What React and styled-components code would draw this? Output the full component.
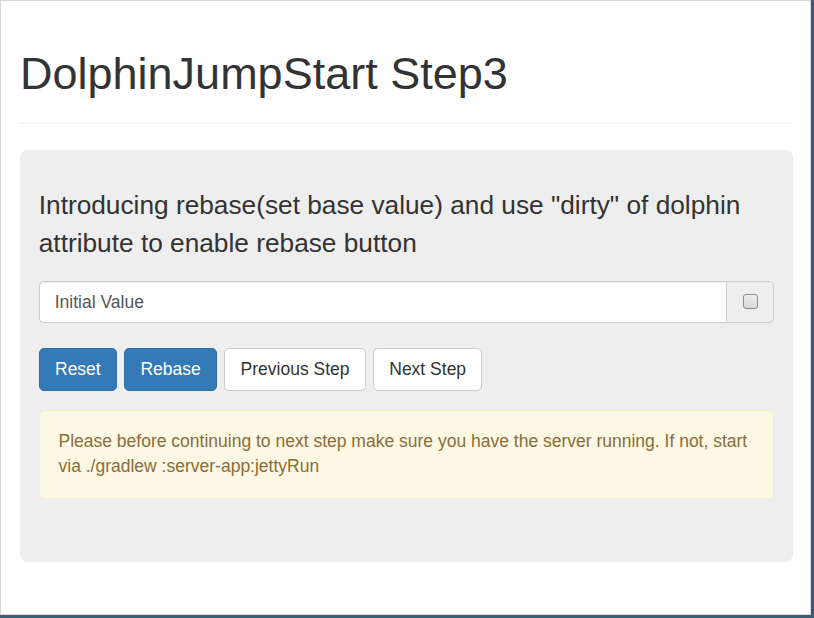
import React from "react";
import styled, { createGlobalStyle } from "styled-components";

const GlobalStyle = createGlobalStyle`
  html, body {
    margin: 0;
    padding: 0;
    background: #ffffff;
  }
  body {
    font-family: "Liberation Sans", Arial, sans-serif;
    color: #333333;
  }
`;

const Window = styled.div`
  width: 814px;
  height: 618px;
  box-sizing: border-box;
  border-right: 3px solid #3d5a79;
  border-bottom: 3px solid #3d5a79;
  background: #3d5a79;
`;

const Page = styled.div`
  height: 100%;
  box-sizing: border-box;
  border: 1px solid #d6d6d6;
  background: #ffffff;
  padding: 0 17px 0 19px;
`;

const PageHeader = styled.div`
  padding: 48px 0 24px;
  border-bottom: 1px solid #eeeeee;
  margin-bottom: 26px;
`;

const Title = styled.h1`
  margin: 0;
  font-size: 45px;
  line-height: 49.5px;
  font-weight: 500;
  color: #333333;
`;

const Jumbotron = styled.div`
  background: #eeeeee;
  border-radius: 7.5px;
  padding: 37.5px 18.75px;
`;

const Lead = styled.p`
  margin: 0 0 18.75px;
  font-size: 26.25px;
  line-height: 37.5px;
  font-weight: 400;
`;

const InputGroup = styled.div`
  display: flex;
  height: 42.5px;
  margin-bottom: 25px;
`;

const TextInput = styled.input`
  flex: 1;
  min-width: 0;
  box-sizing: border-box;
  height: 42.5px;
  padding: 7.5px 15px;
  font-family: inherit;
  font-size: 17.5px;
  color: #555555;
  background: #ffffff;
  border: 1.25px solid #cccccc;
  border-right: none;
  border-radius: 5px 0 0 5px;
  box-shadow: inset 0 1px 1px rgba(0, 0, 0, 0.075);
  outline: none;
`;

const Addon = styled.span`
  display: flex;
  align-items: center;
  justify-content: center;
  box-sizing: border-box;
  width: 48px;
  background: #eeeeee;
  border: 1.25px solid #cccccc;
  border-radius: 0 5px 5px 0;
`;

const Checkbox = styled.span`
  display: block;
  width: 13px;
  height: 13px;
  border: 1px solid #8e8e8e;
  border-radius: 3px;
  background: linear-gradient(#eeeeee, #d8d8d8);
  margin-top: -1px;
`;

const ButtonRow = styled.div`
  display: flex;
  gap: 7.25px;
  margin-bottom: 18.75px;
`;

const Button = styled.button`
  box-sizing: border-box;
  height: 42.5px;
  padding: 7.5px 15.25px;
  font-family: inherit;
  font-size: 17.5px;
  line-height: 25px;
  border-radius: 5px;
  border: 1.25px solid ${p => (p.$primary ? "#2e6da4" : "#cccccc")};
  background: ${p => (p.$primary ? "#337ab7" : "#ffffff")};
  color: ${p => (p.$primary ? "#ffffff" : "#333333")};
  cursor: pointer;
`;

const Alert = styled.div`
  padding: 18.75px;
  margin-bottom: 25px;
  font-size: 17.5px;
  line-height: 25px;
  color: #8a6d3b;
  background: #fcf8e3;
  border: 1.25px solid #faebcc;
  border-radius: 5px;
`;

export default function App() {
  return (
    <>
      <GlobalStyle />
      <Window>
        <Page>
          <PageHeader>
            <Title>DolphinJumpStart Step3</Title>
          </PageHeader>
          <Jumbotron>
            <Lead>
              Introducing rebase(set base value) and use "dirty" of dolphin
              attribute to enable rebase button
            </Lead>
            <InputGroup>
              <TextInput defaultValue="Initial Value" />
              <Addon>
                <Checkbox />
              </Addon>
            </InputGroup>
            <ButtonRow>
              <Button $primary>Reset</Button>
              <Button $primary>Rebase</Button>
              <Button>Previous Step</Button>
              <Button>Next Step</Button>
            </ButtonRow>
            <Alert>
              Please before continuing to next step make sure you have the
              server running. If not, start via ./gradlew :server-app:jettyRun
            </Alert>
          </Jumbotron>
        </Page>
      </Window>
    </>
  );
}
